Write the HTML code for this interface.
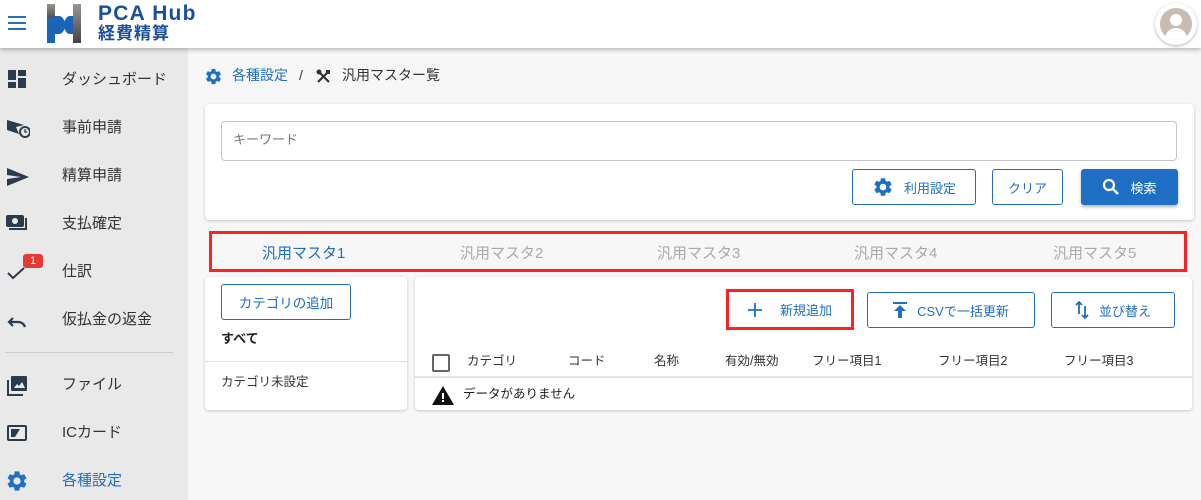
<!DOCTYPE html>
<html><head><meta charset="utf-8"><style>
*{box-sizing:border-box;margin:0;padding:0}
body{width:1201px;height:500px;overflow:hidden;background:#f7f7f7;font-family:"Liberation Sans","Noto Sans CJK JP",sans-serif;color:#333;position:relative;font-size:14px}
.a{position:absolute}
.t{position:absolute;white-space:nowrap;line-height:1}
#hdr{left:0;top:0;width:1201px;height:48px;background:#fff;box-shadow:0 2px 4px rgba(0,0,0,.25);z-index:5}
#side{left:0;top:48px;width:188px;height:452px;background:#e9e9e9}
.si{position:absolute;left:62px;font-size:15px;color:#333;line-height:1}
.card{position:absolute;background:#fff;border-radius:4px;box-shadow:0 1px 3px rgba(0,0,0,.2)}
.btn{position:absolute;border:1px solid #1f6fc5;border-radius:3px;color:#1f6fc5;background:#fff;font-size:13px;display:flex;align-items:center;justify-content:center;gap:10px}
.tab{position:absolute;top:246px;font-size:15px;color:#aaa;line-height:1}
.col{position:absolute;top:355px;font-size:12.5px;color:#333;line-height:1}
</style></head><body>
<svg width="0" height="0" style="position:absolute"><defs><symbol id="gear" viewBox="0 0 24 24"><path d="M19.14 12.94c.04-.3.06-.61.06-.94 0-.32-.02-.64-.07-.94l2.03-1.58a.49.49 0 0 0 .12-.61l-1.92-3.32a.49.49 0 0 0-.59-.22l-2.39.96c-.5-.38-1.03-.7-1.62-.94l-.36-2.54a.48.48 0 0 0-.48-.41h-3.84a.48.48 0 0 0-.47.41l-.36 2.54c-.59.24-1.13.57-1.62.94l-2.39-.96a.48.48 0 0 0-.59.22L2.74 8.87a.47.47 0 0 0 .12.61l2.03 1.58c-.05.3-.09.63-.09.94s.02.64.07.94l-2.03 1.58a.49.49 0 0 0-.12.61l1.92 3.32c.12.22.37.29.59.22l2.39-.96c.5.38 1.03.7 1.62.94l.36 2.54c.05.24.24.41.48.41h3.84c.24 0 .44-.17.47-.41l.36-2.54c.59-.24 1.13-.56 1.62-.94l2.39.96c.22.08.47 0 .59-.22l1.92-3.32a.47.47 0 0 0-.12-.61l-2.01-1.58zM12 15.6A3.6 3.6 0 1 1 12 8.4a3.6 3.6 0 0 1 0 7.2z"/></symbol></defs></svg>
<div id="hdr" class="a">
 <svg class="a" style="left:8px;top:16px" width="18" height="14"><rect y="0" width="18" height="2" fill="#1f6fc5"/><rect y="6" width="18" height="2" fill="#1f6fc5"/><rect y="12" width="18" height="2" fill="#1f6fc5"/></svg>
 <svg class="a" style="left:46px;top:4px" width="36" height="40">
  <defs><linearGradient id="g" x1="0" y1="0" x2="0" y2="1"><stop offset="0" stop-color="#9a9590"/><stop offset="1" stop-color="#444"/></linearGradient></defs>
  <rect x="1" y="0" width="8" height="16" fill="url(#g)"/>
  <rect x="1" y="14" width="8" height="25" fill="#1a65b8"/>
  <path d="M9 12 H13 A6 9 0 0 1 13 30 H9Z" fill="#1a65b8"/>
  <rect x="27" y="0" width="8" height="39" fill="url(#g)"/>
  <path d="M27 12 H24 A6 9 0 0 0 24 30 H27Z" fill="#1a65b8"/>
 </svg>
 <div class="t" style="left:98px;top:3px;font-size:21px;font-weight:bold;color:#1a4f9c;letter-spacing:1.2px">PCA Hub</div>
 <div class="t" style="left:98px;top:25px;font-size:17px;font-weight:bold;color:#1a4f9c;letter-spacing:1px">経費精算</div>
 <div class="a" style="left:1155px;top:3px;width:42px;height:42px;border-radius:50%;background:#fff;box-shadow:0 1px 3px rgba(0,0,0,.3)"></div>
 <div class="a" style="left:1160px;top:8px;width:32px;height:32px;border-radius:50%;background:#c9bcb2;overflow:hidden">
  <div class="a" style="left:10px;top:6px;width:12px;height:12px;border-radius:50%;background:#fff"></div>
  <div class="a" style="left:5px;top:20px;width:22px;height:14px;border-radius:11px 11px 0 0;background:#fff"></div>
 </div>
</div>
<div id="side" class="a">
 <svg class="a" style="left:8px;top:22px" width="18" height="18" fill="#2c3a4a"><rect x="0" y="0" width="8" height="10"/><rect x="10" y="0" width="8" height="6"/><rect x="0" y="12" width="8" height="6"/><rect x="10" y="8" width="8" height="10"/></svg>
 <div class="si" style="top:24px">ダッシュボード</div>
 <svg class="a" style="left:6px;top:70px" width="24" height="20" fill="#2c3a4a"><path d="M1 2 L18 7 L10 9 L13 16 L1 12Z"/><circle cx="19" cy="14" r="6" fill="#2c3a4a"/><circle cx="19" cy="14" r="4" fill="#e9e9e9"/><path d="M19 11v3h2" stroke="#2c3a4a" stroke-width="1.3" fill="none"/></svg>
 <div class="si" style="top:72px">事前申請</div>
 <svg class="a" style="left:7px;top:120px" width="22" height="18" fill="#2c3a4a"><path d="M0 0 L22 9 L0 18 L0 11 L14 9 L0 7Z"/></svg>
 <div class="si" style="top:120px">精算申請</div>
 <svg class="a" style="left:6px;top:166px" width="22" height="18" fill="#2c3a4a"><rect x="0" y="1" width="18" height="12" rx="2"/><circle cx="9" cy="7" r="3" fill="#e9e9e9"/><path d="M20 4v11H3" stroke="#2c3a4a" stroke-width="2" fill="none"/></svg>
 <div class="si" style="top:168px">支払確定</div>
 <svg class="a" style="left:7px;top:218px" width="18" height="14"><path d="M1 7 L6 12 L17 2" stroke="#2c3a4a" stroke-width="2" fill="none"/></svg>
 <div class="a" style="left:23px;top:206px;width:20px;height:14px;background:#e53935;border-radius:3px;color:#fff;font-size:11px;text-align:center;line-height:14px">1</div>
 <div class="si" style="top:216px">仕訳</div>
 <svg class="a" style="left:7px;top:268px" width="20" height="12"><path d="M6 2 L2 6 L6 10 M2 6 H11 A7 7 0 0 1 18 11" stroke="#2c3a4a" stroke-width="2.2" fill="none"/></svg>
 <div class="si" style="top:264px">仮払金の返金</div>
 <div class="a" style="left:5px;top:304px;width:168px;height:1px;background:#ccc"></div>
 <svg class="a" style="left:7px;top:328px" width="20" height="20" fill="#2c3a4a"><rect x="4" y="0" width="16" height="15" rx="1"/><path d="M7 12 L10 8 L12 10 L15 6 L18 12Z" fill="#e9e9e9"/><path d="M1 4v15h15" stroke="#2c3a4a" stroke-width="2" fill="none"/></svg>
 <div class="si" style="top:329px">ファイル</div>
 <svg class="a" style="left:7px;top:377px" width="20" height="16"><rect x="1" y="1" width="18" height="14" rx="1" stroke="#2c3a4a" stroke-width="2" fill="none"/><path d="M4 4 H13 L8 12 H4Z" fill="#2c3a4a"/></svg>
 <div class="si" style="top:377px">ICカード</div>
 <svg class="a" style="left:5px;top:421px" width="24" height="24" fill="#1f6fc5"><use href="#gear"/></svg>
 <div class="si" style="top:425px;color:#1f6fc5">各種設定</div>
</div>

<svg class="a" style="left:204px;top:67px" width="19" height="19" fill="#1f6fc5"><use href="#gear"/></svg>
<div class="t" style="left:232px;top:68px;font-size:14px;color:#1f6fc5">各種設定</div>
<div class="t" style="left:299px;top:68px;font-size:14px;color:#333">/</div>
<svg class="a" style="left:316px;top:69px" width="15" height="15"><path d="M2 2 L13 13 M13 2 L2 13" stroke="#333" stroke-width="2.2"/><circle cx="3" cy="3" r="2.5" fill="#333"/><rect x="10" y="1" width="4" height="4" fill="#333"/></svg>
<div class="t" style="left:342px;top:68px;font-size:14px;color:#333">汎用マスター覧</div>

<div class="card" style="left:205px;top:104px;width:989px;height:116px"></div>
<div class="a" style="left:221px;top:121px;width:956px;height:40px;border:1px solid #c4c4c4;border-radius:4px;background:#fff"></div>
<div class="t" style="left:233px;top:133px;font-size:13px;color:#777">キーワード</div>
<div class="btn" style="left:852px;top:169px;width:124px;height:36px"><svg width="22" height="22" fill="#1f6fc5"><use href="#gear"/></svg>利用設定</div>
<div class="btn" style="left:992px;top:169px;width:71px;height:36px">クリア</div>
<div class="btn" style="left:1081px;top:169px;width:97px;height:36px;background:#1f6fc5;color:#fff;box-shadow:0 2px 3px rgba(0,0,0,.3)"><svg width="18" height="18"><circle cx="7" cy="7" r="5" stroke="#fff" stroke-width="2.2" fill="none"/><path d="M11 11 L16 16" stroke="#fff" stroke-width="2.4"/></svg>検索</div>

<div class="a" style="left:209px;top:231px;width:978px;height:41px;border:3px solid #f22;"></div>
<div class="tab" style="left:262px;color:#1f6fc5">汎用マスタ1</div>
<div class="tab" style="left:460px">汎用マスタ2</div>
<div class="tab" style="left:657px">汎用マスタ3</div>
<div class="tab" style="left:854px">汎用マスタ4</div>
<div class="tab" style="left:1053px">汎用マスタ5</div>

<div class="card" style="left:205px;top:277px;width:202px;height:133px"></div>
<div class="btn" style="left:221px;top:284px;width:130px;height:36px;font-size:13.5px">カテゴリの追加</div>
<div class="t" style="left:221px;top:332px;font-size:13px;font-weight:bold;color:#222">すべて</div>
<div class="a" style="left:205px;top:361px;width:202px;height:1px;background:#ddd"></div>
<div class="t" style="left:221px;top:376px;font-size:12.5px;color:#333">カテゴリ未設定</div>

<div class="card" style="left:415px;top:277px;width:777px;height:133px"></div>
<div class="a" style="left:726px;top:289px;width:128px;height:41px;border:3px solid #f22"></div>
<div class="btn" style="left:730px;top:293px;width:120px;height:33px;border:none;gap:18px"><svg width="14" height="14"><path d="M7 0v14M0 7h14" stroke="#1f6fc5" stroke-width="1.8"/></svg>新規追加</div>
<div class="btn" style="left:867px;top:292px;width:168px;height:36px"><svg width="14" height="16" fill="#1f6fc5"><rect x="0" y="0" width="14" height="2"/><path d="M7 3 L13 9 H9 V16 H5 V9 H1Z"/></svg>CSVで一括更新</div>
<div class="btn" style="left:1051px;top:292px;width:124px;height:36px"><svg width="14" height="18"><path d="M4 1v12M1 4l3-3 3 3M10 17V5M7 14l3 3 3-3" stroke="#1f6fc5" stroke-width="1.8" fill="none"/></svg>並び替え</div>
<div class="a" style="left:432px;top:354px;width:18px;height:18px;border:2px solid #666;border-radius:2px"></div>
<div class="col" style="left:467px">カテゴリ</div>
<div class="col" style="left:568px">コード</div>
<div class="col" style="left:654px">名称</div>
<div class="col" style="left:725px">有効/無効</div>
<div class="col" style="left:812px">フリー項目1</div>
<div class="col" style="left:938px">フリー項目2</div>
<div class="col" style="left:1064px">フリー項目3</div>
<div class="a" style="left:415px;top:376px;width:777px;height:2px;background:#e2e2e2"></div>
<svg class="a" style="left:432px;top:386px" width="22" height="19"><path d="M11 0 L22 19 H0Z" fill="#111"/><rect x="10" y="7" width="2" height="6" fill="#fff"/><rect x="10" y="14" width="2" height="2" fill="#fff"/></svg>
<div class="t" style="left:463px;top:388px;font-size:12.5px;color:#222">データがありません</div>
</body></html>
